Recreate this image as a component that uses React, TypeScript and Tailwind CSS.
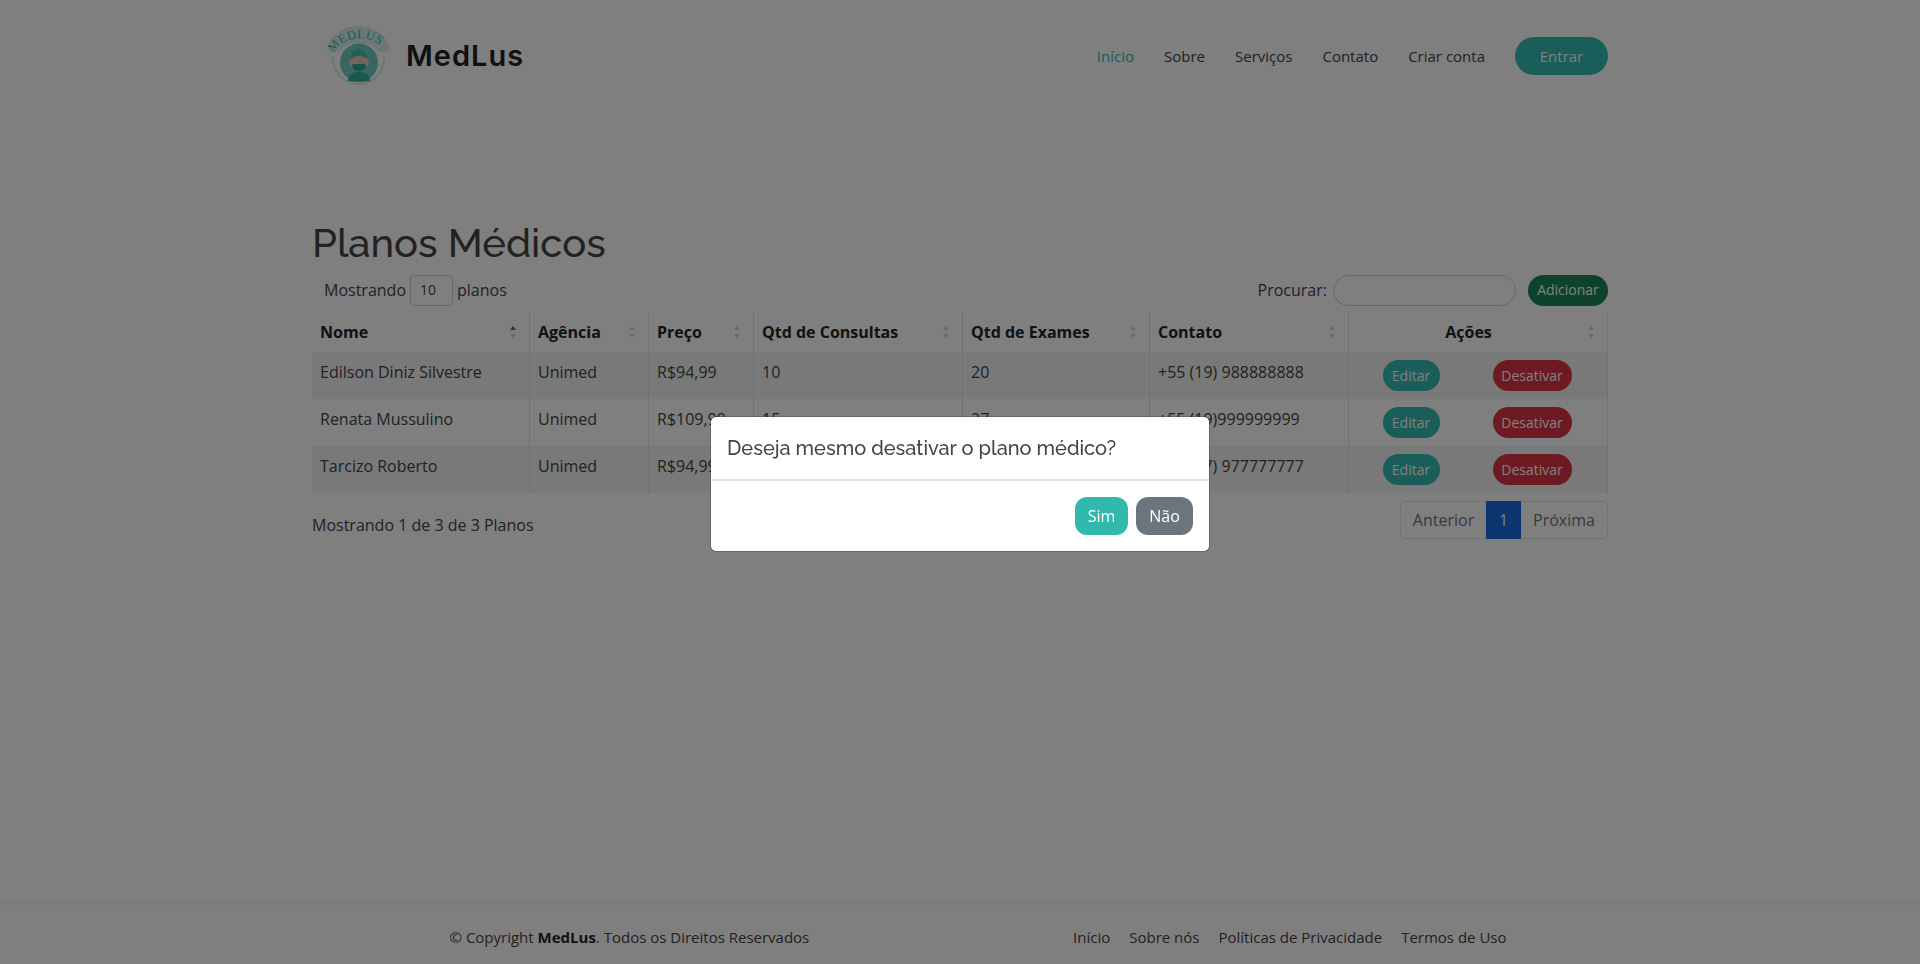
const navLinks = ["Início", "Sobre", "Serviços", "Contato", "Criar conta"];
const columns = ["Nome", "Agência", "Preço", "Qtd de Consultas", "Qtd de Exames", "Contato"];
const columnWidths = ["w-[218px]", "w-[119px]", "w-[105px]", "w-[209px]", "w-[187px]", "w-[199px]", "w-[259px]"];
const plans = [
  ["Edilson Diniz Silvestre", "Unimed", "R$94,99", "10", "20", "+55 (19) 988888888"],
  ["Renata Mussulino", "Unimed", "R$109,99", "15", "27", "+55 (19)999999999"],
  ["Tarcizo Roberto", "Unimed", "R$94,99", "10", "20", "+55 (17) 977777777"],
];
const footerLinks = ["Início", "Sobre nós", "Políticas de Privacidade", "Termos de Uso"];

function Logo() {
  return (
    <svg width="65" height="60" viewBox="0 0 65 60" className="shrink-0">
      <path d="M1 24 C3 10 17 0 32.5 0 C48 0 62 10 64 24 C60 27 56 26 52 25 C47 19 40 17 33 17 C26 17 19 19 14 25 C9 26 5 27 1 24 Z" fill="#d8f0ec" />
      <path d="M7 30 C6 46 18 58 33 58 C47 58 59 46 58 30" fill="none" stroke="#d8f0ec" strokeWidth="2" />
      <circle cx="33" cy="36.5" r="19" fill="#6fcfc2" />
      <path id="medlus-arc" d="M8 27 C15 9 50 7 58 25" fill="none" />
      <text fontFamily="'Liberation Serif', serif" fontSize="12.5" fill="#2fc0ad" letterSpacing="0.2">
        <textPath href="#medlus-arc">MEDLUS</textPath>
      </text>
      <path d="M22 55 C22 48 27 46 33 46 C39 46 44 48 44 55 C39 56 27 56 22 55 Z" fill="#2fb39b" />
      <ellipse cx="33" cy="36" rx="10" ry="7.5" fill="#f2c4ac" />
      <path d="M25 33 C25 26 29 23 33 23 C37 23 41 26 41 33 C38 31 36 30 33 30 C30 30 28 31 25 33 Z" fill="#45bfa9" />
      <path d="M26.5 38 H39.5 V41 C38.5 46.5 27.5 46.5 26.5 41 Z" fill="#2aa892" />
    </svg>
  );
}

function SortArrows({ active }: { active?: boolean }) {
  return (
    <svg width="6" height="14" viewBox="0 0 6 14" className="shrink-0">
      <path d="M3 1 L6 5 H0 Z" fill={active ? "#666666" : "#d4d4d4"} />
      <path d="M3 13 L6 9 H0 Z" fill="#d4d4d4" />
    </svg>
  );
}

export default function App() {
  return (
    <div className="min-h-screen flex flex-col bg-white text-[#444444] text-base font-['Open_Sans',sans-serif]">
      <header className="w-[1296px] mx-auto h-[113px] flex items-center justify-between shrink-0">
        <a className="flex items-center gap-[15px] pl-[14px] mt-[-1px]">
          <Logo />
          <span className="text-[29px] font-semibold text-[#222222] tracking-[1px] font-['Inter',sans-serif]">MedLus</span>
        </a>
        <nav className="flex items-center gap-[30px] text-[15px] mt-[-2px]">
          {navLinks.map((link, i) => (
            <a key={link} className={`pt-px ${i === 0 ? "text-[#34b7ac]" : "text-[#444444]"}`}>{link}</a>
          ))}
          <button className="w-[93px] h-[38px] pt-px rounded-full bg-[#34bdb2] text-white">Entrar</button>
        </nav>
      </header>

      <main className="w-[1296px] mx-auto mt-[106px]">
        <h1 className="text-[40px] leading-[48px] font-medium text-[#444444] font-['Raleway','Inter',sans-serif]">Planos Médicos</h1>
        <div className="flex items-center justify-between mt-2 h-[30px]">
          <div className="flex items-center pl-3">
            <span>Mostrando</span>
            <span className="w-[43px] h-[31px] ml-[4px] mr-[4px] border border-[#ced4da] rounded text-sm flex items-center pl-[9px]">10</span>
            <span>planos</span>
          </div>
          <div className="flex items-center">
            <span>Procurar:</span>
            <div className="w-[183px] h-[31px] ml-[6px] border border-[#ced4da] rounded-full bg-white" />
            <button className="w-[80px] h-[31px] ml-3 rounded-full bg-[#198754] text-white text-sm">Adicionar</button>
          </div>
        </div>

        <table className="table-fixed w-full mt-[7px] border-separate border-spacing-0">
          <colgroup>
            {columnWidths.map((w) => <col key={w} className={w} />)}
          </colgroup>
          <thead>
            <tr>
              {columns.map((col, i) => (
                <th key={col} className="border-r border-[#dee2e6] p-2 pr-[13px] font-bold text-[#212529] text-left">
                  <div className="flex items-center justify-between">
                    {col}
                    <SortArrows active={i === 0} />
                  </div>
                </th>
              ))}
              <th className="border-r border-[#dee2e6] p-2 pr-[13px] font-bold text-[#212529]">
                <div className="flex items-center">
                  <span className="flex-1 text-center pr-[8px]">Ações</span>
                  <SortArrows />
                </div>
              </th>
            </tr>
          </thead>
          <tbody>
            {plans.map((plan, r) => (
              <tr key={plan[0]} className={r % 2 === 0 ? "bg-[#f2f2f2]" : "bg-white"}>
                {plan.map((cell, c) => (
                  <td key={c} className="border-r border-[#dee2e6] px-2 pt-2 pb-[15px] align-top text-[#444444]">{cell}</td>
                ))}
                <td className="border-r border-[#dee2e6] pl-2 pr-[10px] py-2">
                  <div className="flex justify-center gap-[53px] text-sm text-white">
                    <button className="w-[57px] h-[31px] rounded-full bg-[#34bdb2]">Editar</button>
                    <button className="w-[79px] h-[31px] rounded-full bg-[#dc3545]">Desativar</button>
                  </div>
                </td>
              </tr>
            ))}
          </tbody>
        </table>

        <div className="flex justify-between mt-2">
          <p className="pt-[12px]">Mostrando 1 de 3 de 3 Planos</p>
          <div className="flex h-[38px] border border-[#dee2e6] rounded text-[#6c757d]">
            <span className="w-[85px] flex items-center justify-center">Anterior</span>
            <span className="w-[35px] -my-px flex items-center justify-center bg-[#1a6de0] text-white">1</span>
            <span className="w-[86px] flex items-center justify-center">Próxima</span>
          </div>
        </div>
      </main>

      <footer className="mt-auto h-[59px] shrink-0 pt-[5px] pl-[36px] bg-white shadow-[0_-4px_8px_rgba(0,0,0,0.05)] flex items-center text-[15px]">
        <div className="w-[1057px] mx-auto flex items-center justify-between">
          <p>© Copyright <strong className="font-bold text-[#212529]">MedLus</strong>. Todos os Direitos Reservados</p>
          <div className="flex gap-[19px]">
            {footerLinks.map((link) => <a key={link}>{link}</a>)}
          </div>
        </div>
      </footer>

      {/* modal */}
      <div className="fixed inset-0 bg-black/50 pt-[416px]">
        <div className="w-[500px] h-[136px] mx-auto bg-white bg-clip-padding rounded-md border border-black/20">
          <div className="h-[64px] px-4 flex items-center border-b-2 border-[#dee2e6]">
            <h5 className="text-xl font-medium text-[#444444] font-['Raleway','Inter',sans-serif]">Deseja mesmo desativar o plano médico?</h5>
          </div>
          <div className="flex justify-end gap-2 pt-[16px] pr-[16px]">
            <button className="w-[53px] h-[38px] rounded-xl bg-[#31b9ae] text-white font-medium">Sim</button>
            <button className="w-[57px] h-[38px] rounded-xl bg-[#6c757d] text-white font-medium">Não</button>
          </div>
        </div>
      </div>
    </div>
  );
}
